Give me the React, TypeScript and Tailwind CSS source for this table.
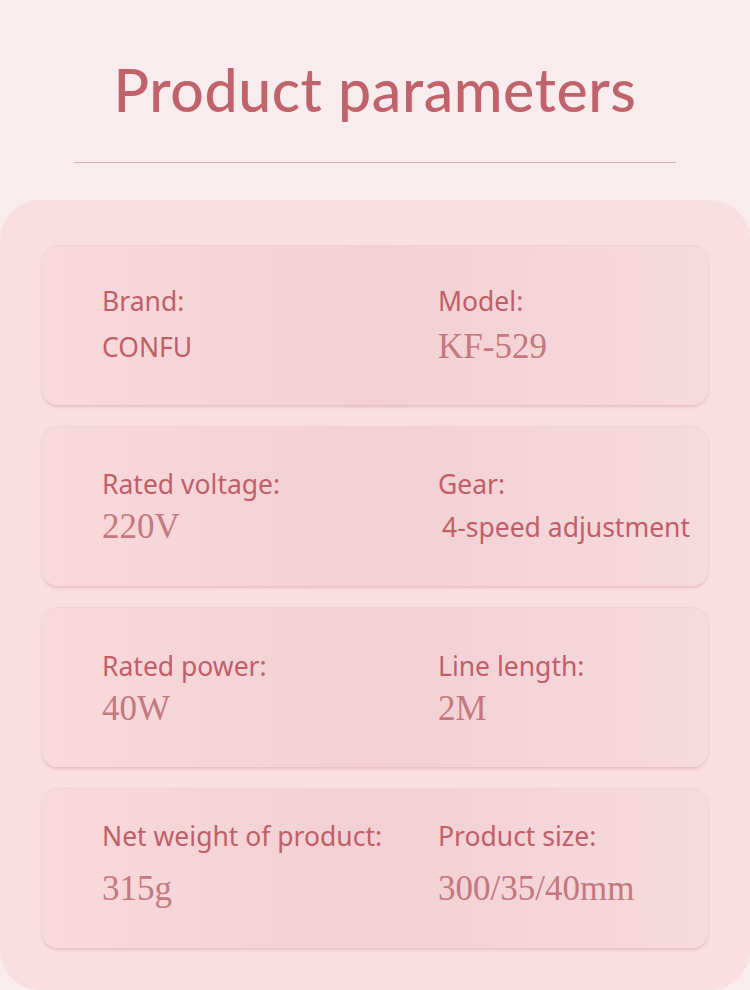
const rows = [
  {
    a: { label: "Brand:", value: "CONFU", serif: false },
    b: { label: "Model:", value: "KF-529", serif: true },
    pt: "pt-[40px]",
    gap: "mt-[11px]",
  },
  {
    a: { label: "Rated voltage:", value: "220V", serif: true },
    b: { label: "Gear:", value: "4-speed adjustment", serif: false, indent: true },
    pt: "pt-[42px]",
    gap: "mt-[8px]",
  },
  {
    a: { label: "Rated power:", value: "40W", serif: true },
    b: { label: "Line length:", value: "2M", serif: true },
    pt: "pt-[43px]",
    gap: "mt-[8px]",
  },
  {
    a: { label: "Net weight of product:", value: "315g", serif: true },
    b: { label: "Product size:", value: "300/35/40mm", serif: true },
    pt: "pt-[32px]",
    gap: "mt-[18px]",
  },
];

type Cell = { label: string; value: string; serif: boolean; indent?: boolean };

const Item = ({ cell, gap }: { cell: Cell; gap: string }) => (
  <div className="flex flex-col">
    <div className="text-[26.5px] leading-[30px] text-[#c05f68] font-['Noto_Sans',sans-serif] whitespace-nowrap">
      {cell.label}
    </div>
    {cell.serif ? (
      <div className={`${gap} text-[35px] leading-[40px] text-[#c47880] font-['Liberation_Serif',serif] whitespace-nowrap`}>
        {cell.value}
      </div>
    ) : (
      <div
        className={`${gap} text-[26.5px] leading-[40px] text-[#c05f68] font-['Noto_Sans',sans-serif] whitespace-nowrap ${
          cell.indent ? "pl-[4px]" : ""
        }`}
      >
        {cell.value}
      </div>
    )}
  </div>
);

export default function App() {
  return (
    <div className="w-[750px] h-[990px] overflow-hidden bg-[#f9ecee] flex flex-col">
      <div className="flex flex-col items-center pt-[54px]">
        <h1 className="text-[59px] leading-[72px] text-[#c0636b] font-['Lato',sans-serif] font-medium tracking-[0.6px]">
          Product parameters
        </h1>
        <div className="mt-[36px] w-[602px] h-px bg-[#d7aeb3]" />
      </div>
      <div className="mt-[37px] flex-1 rounded-[40px] bg-[#f9dfe1] px-[42px] pt-[45px] flex flex-col gap-[21px]">
        {rows.map((r, i) => (
          <div
            key={i}
            className={`h-[160px] rounded-[16px] bg-gradient-to-r from-[#f8d9dc] via-[#f2d0d4] to-[#f7dadd] shadow-[0_2px_3px_rgba(196,130,140,0.35)] border-t border-[#f3d2d6] grid grid-cols-[336px_1fr] pl-[60px] ${r.pt}`}
          >
            <Item cell={r.a} gap={r.gap} />
            <Item cell={r.b} gap={r.gap} />
          </div>
        ))}
      </div>
    </div>
  );
}
